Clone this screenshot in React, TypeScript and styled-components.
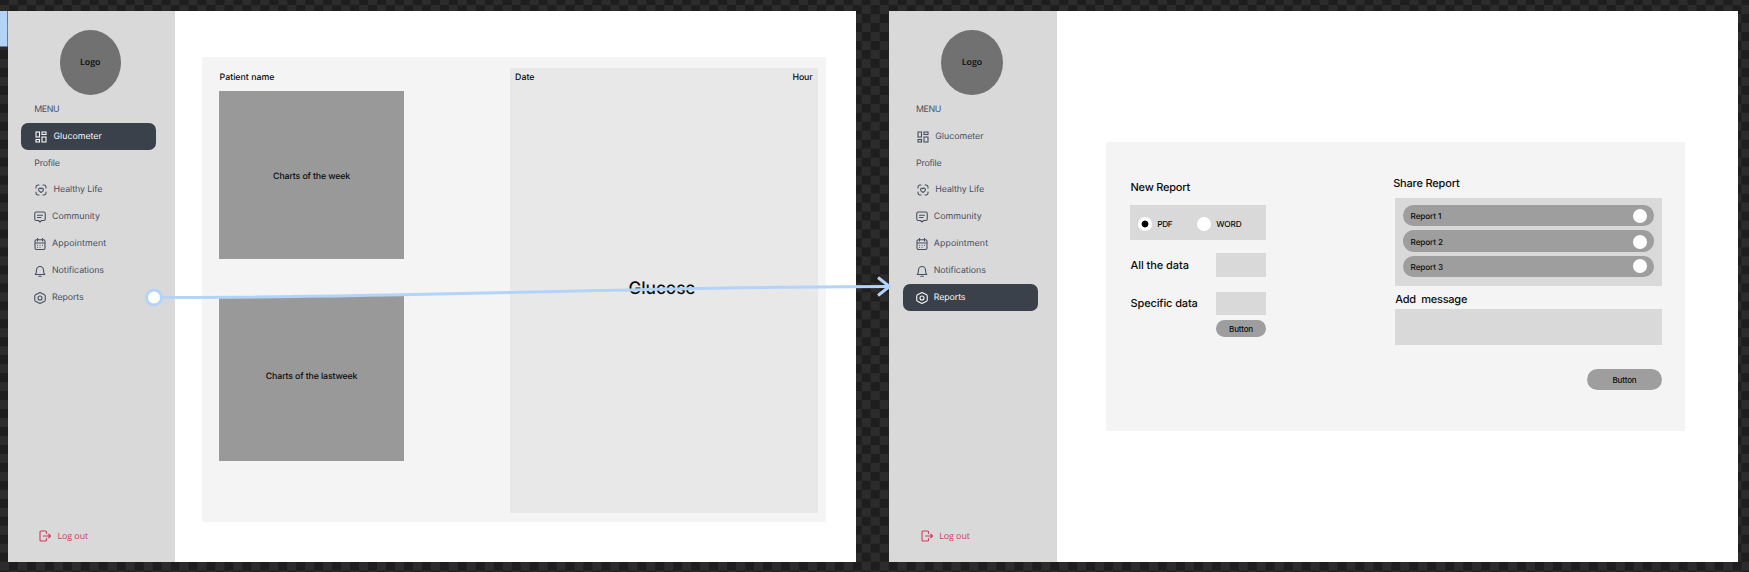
import React from 'react';
import styled, { createGlobalStyle, css } from 'styled-components';

const GlobalStyle = createGlobalStyle`
  *, *::before, *::after { box-sizing: border-box; }
  body { margin: 0; overflow: hidden; }
`;

/* ---------- canvas and boards ---------- */

const Canvas = styled.div`
  position: relative;
  display: flex;
  gap: 33.1px;
  width: 1749px;
  height: 572px;
  padding: 10.5px 0 0 7.5px;
  overflow: hidden;
  background: repeating-conic-gradient(#2c2c2c 0 25%, #1e1e1e 0 50%) 0 -3.9px / 17.968px 17.968px;
  font-family: Inter, 'Liberation Sans', sans-serif;
  font-size: 8.8px;
  font-weight: 500;
  line-height: 1;
  color: #0c0c0c;
  text-rendering: geometricPrecision;
`;

const Board = styled.section`
  display: flex;
  flex: none;
  align-items: flex-start;
  width: 848.7px;
  height: 551.4px;
  background: #fff;
`;

const Text = styled.span<{ $size?: number; $track?: number; $drop?: number }>`
  padding-top: ${p => p.$drop ?? 0}px;
  font-size: ${p => p.$size ?? 8.8}px;
  letter-spacing: ${p => p.$track ?? 0}px;
  white-space: pre;
`;

/* ---------- sidebar ---------- */

const Side = styled.aside`
  display: flex;
  flex: none;
  flex-direction: column;
  align-items: flex-start;
  width: 167.8px;
  height: 100%;
  padding: 19px 0 18px 13.5px;
  background: #d9d9d9;
  color: #475063;
  font-weight: 400;
`;

const Logo = styled.div`
  display: flex;
  align-items: center;
  justify-content: center;
  width: 61.3px;
  height: 65px;
  margin-left: 38.6px;
  border-radius: 50%;
  background: #717171;
  color: #0c0c0c;
  font-family: 'Open Sans', sans-serif;
  font-weight: 600;
`;

const Heading = styled.div<{ $height: number }>`
  display: flex;
  align-items: center;
  height: ${p => p.$height}px;
  padding-left: 13.3px;
`;

const Item = styled.div<{ $active?: boolean; $indent: number }>`
  display: flex;
  flex: none;
  align-items: center;
  width: 135px;
  height: 27px;
  padding-left: ${p => p.$indent}px;
  border-radius: 7px;
  ${p => p.$active && css`
    background: #3a414b;
    color: #f6f7f8;
  `}
`;

const LogOut = styled.div`
  display: flex;
  align-items: center;
  gap: 6.4px;
  height: 16px;
  margin-top: auto;
  padding-left: 18px;
  color: #cb3f62;
  font-family: 'Open Sans', sans-serif;
`;

const Glyph = styled.svg<{ $gap?: number }>`
  flex: none;
  width: 12px;
  height: 12px;
  margin-right: ${p => p.$gap ?? 0}px;
  fill: none;
  stroke: currentColor;
  stroke-width: 2.2;
  stroke-linecap: round;
  stroke-linejoin: round;
`;

const icons: Record<string, React.ReactNode> = {
  grid: (
    <g strokeLinejoin="miter">
      <rect x="2" y="2" width="7" height="10" />
      <rect x="14" y="2" width="8" height="5" />
      <rect x="2" y="17" width="7" height="5" />
      <rect x="14" y="12" width="8" height="10" />
    </g>
  ),
  heart: (
    <>
      <path d="M2 8V6a4 4 0 0 1 3.500-4H8M16 2h2.500A4 4 0 0 1 22 6v2M22 16v2a4 4 0 0 1-3.500 4H16M8 22H5.500A4 4 0 0 1 2 18v-2" />
      <path d="M12 17c-3-2-5-3.600-5-6 0-3 3.500-3.600 5-1.500 1.500-2.100 5-1.500 5 1.500 0 2.400-2 4-5 6z" />
    </>
  ),
  chat: (
    <path d="M4.500 2h15A3 3 0 0 1 22.500 5v11a3 3 0 0 1-3 3H15l-3 3-3-3H4.500a3 3 0 0 1-3-3V5a3 3 0 0 1 3-3zM7 8.500h10M7 13h7" />
  ),
  calendar: (
    <>
      <path d="M5 3.500h14a3 3 0 0 1 3 3V20a3 3 0 0 1-3 3H5a3 3 0 0 1-3-3V6.500a3 3 0 0 1 3-3zM2 10h20M7 1v5M17 1v5" />
      <path d="M7 14.500h.1M12 14.500h.1M17 14.500h.1M7 18.500h.1M12 18.500h.1" />
    </>
  ),
  bell: <path d="M2.500 19h19c-2-2-2.500-4-2.500-9a7 7 0 0 0-14 0c0 5-.5 7-2.500 9zM9.500 22.500h5" />,
  hexagon: (
    <>
      <path d="M12 1l9 4.500q1.500.8 1.500 2.500v8q0 1.700-1.500 2.500L12 23l-9-4.500Q1.500 17.700 1.500 16V8Q1.500 6.300 3 5.500z" />
      <circle cx="12" cy="12" r="4" />
    </>
  ),
  exit: <path d="M15 7V4a2 2 0 0 0-2-2H4a2 2 0 0 0-2 2v16a2 2 0 0 0 2 2h9a2 2 0 0 0 2-2v-3M9 12h14M19.500 8.500L23 12l-3.500 3.500" />,
};

const Icon = ({ name, gap }: { name: string; gap?: number }) => (
  <Glyph viewBox="0 0 24 24" $gap={gap}>{icons[name]}</Glyph>
);

type NavEntry = { label: string; icon: string; track: number; indent: number; gap: number };

const glucometer: NavEntry = { label: 'Glucometer', icon: 'grid', track: 0, indent: 13.9, gap: 6.6 };
const profile: NavEntry[] = [
  { label: 'Healthy Life', icon: 'heart', track: -0.06, indent: 14, gap: 6.5 },
  { label: 'Community', icon: 'chat', track: 0.03, indent: 13, gap: 6 },
  { label: 'Appointment', icon: 'calendar', track: 0.1, indent: 13, gap: 6 },
  { label: 'Notifications', icon: 'bell', track: -0.04, indent: 13, gap: 6 },
  { label: 'Reports', icon: 'hexagon', track: -0.08, indent: 13, gap: 6 },
];

const NavItem = ({ entry, active }: { entry: NavEntry; active: string }) => (
  <Item $active={entry.label === active} $indent={entry.indent}>
    <Icon name={entry.icon} gap={entry.gap} />
    <Text $track={entry.track} $drop={2.2}>{entry.label}</Text>
  </Item>
);

const Sidebar = ({ active }: { active: string }) => (
  <Side>
    <Logo><Text>Logo</Text></Logo>
    <Heading $height={28.8}><Text $track={-0.42} $drop={2}>MENU</Text></Heading>
    <NavItem entry={glucometer} active={active} />
    <Heading $height={26}><Text $track={-0.2} $drop={1.5}>Profile</Text></Heading>
    {profile.map(entry => <NavItem key={entry.label} entry={entry} active={active} />)}
    <LogOut>
      <Icon name="exit" />
      <Text $drop={1.2}>Log out</Text>
    </LogOut>
  </Side>
);

/* ---------- glucometer board ---------- */

const GlucosePanel = styled.main`
  display: flex;
  align-items: flex-start;
  width: 624px;
  height: 465px;
  margin: 46.4px 0 0 26.7px;
  padding: 11px 8.2px 0 16.9px;
  background: #f4f4f4;
`;

const Charts = styled.div`
  display: flex;
  flex-direction: column;
  width: 185.4px;
`;

const PatientName = styled.div`
  display: flex;
  align-items: center;
  height: 19px;
  margin-bottom: 4px;
  padding-left: 0.7px;
`;

const Chart = styled.div<{ $height: number; $shift: number }>`
  display: flex;
  align-items: center;
  justify-content: center;
  height: ${p => p.$height}px;
  background: #999;

  & + & { margin-top: 37.5px; }
  & > span { margin-top: ${p => p.$shift}px; }
`;

const Reading = styled.div`
  display: flex;
  flex: 1;
  flex-direction: column;
  height: 444.5px;
  margin: 0.4px 0 0 105.4px;
  background: #e8e8e8;
`;

const ReadingHeader = styled.div`
  display: flex;
  justify-content: space-between;
  padding: 5.3px 5.3px 0 5.4px;
`;

const ReadingValue = styled.div`
  display: flex;
  align-items: center;
  justify-content: center;
  height: 24px;
  margin-top: 193.3px;
  padding-right: 3.5px;
`;

/* ---------- reports board ---------- */

const ReportPanel = styled.main`
  display: flex;
  gap: 128.5px;
  width: 578.8px;
  height: 288.8px;
  margin: 131.4px 0 0 48.8px;
  padding-left: 24px;
  background: #f4f4f4;
`;

const NewReport = styled.div`
  display: flex;
  flex-direction: column;
  width: 136.2px;
  padding-top: 37.5px;
`;

const ShareReport = styled.div`
  display: flex;
  flex-direction: column;
  width: 267.7px;
  padding-top: 33.2px;
`;

const Title = styled.h2<{ $indent?: number }>`
  display: flex;
  align-items: center;
  height: 16px;
  margin: 0;
  padding-left: 0.6px;
  text-indent: ${p => p.$indent ?? 0}px;
  font: inherit;
`;

const Formats = styled.div`
  display: flex;
  align-items: center;
  height: 35px;
  margin-top: 9.5px;
  padding: 3px 0 0 8.5px;
  background: #d9d9d9;
`;

const Format = styled.label`
  display: flex;
  align-items: center;
  gap: 4.8px;
  width: 59px;
`;

const Dot = styled.i<{ $checked?: boolean; $shift?: number }>`
  flex: none;
  width: 14px;
  height: 14px;
  margin-top: ${p => p.$shift ?? 0}px;
  border-radius: 50%;
  background: ${p => (p.$checked ? 'radial-gradient(circle, #000 3px, #fff 3.8px)' : '#fff')};
`;

const Field = styled.div<{ $gap: number }>`
  display: flex;
  align-items: center;
  justify-content: space-between;
  height: 23.4px;
  margin-top: ${p => p.$gap}px;
  padding-left: 0.6px;
`;

const Input = styled.div`
  width: 50px;
  height: 100%;
  background: #d9d9d9;
`;

const Button = styled.button<{ $width: number; $height: number; $gap: number }>`
  display: flex;
  align-items: center;
  justify-content: center;
  align-self: flex-end;
  width: ${p => p.$width}px;
  height: ${p => p.$height}px;
  margin: ${p => p.$gap}px 0 0;
  padding: 1px 0 0;
  border: 0;
  border-radius: 12px;
  background: #9e9e9e;
  color: inherit;
  font: inherit;
`;

const ReportList = styled.div`
  display: flex;
  flex-direction: column;
  gap: 4px;
  height: 87.5px;
  margin: 7px 0 6px;
  padding: 7px 8.5px 0;
  background: #d9d9d9;
`;

const ReportRow = styled.div<{ $shift: number }>`
  display: flex;
  align-items: center;
  justify-content: space-between;
  height: 21.3px;
  padding: 0 7px 0 7.5px;
  border-radius: 11px;
  background: #9e9e9e;

  & > span { margin-top: ${p => p.$shift}px; }
`;

const Message = styled.div`
  height: 35.3px;
  margin-top: 1.8px;
  background: #d9d9d9;
`;

const reports = [
  { label: 'Report 1', shift: 1, dot: 0.5 },
  { label: 'Report 2', shift: 2.5, dot: 2 },
  { label: 'Report 3', shift: 2.5, dot: 0 },
];

/* ---------- prototype connector ---------- */

const Overlay = styled.svg`
  position: absolute;
  inset: 0;
  width: 100%;
  height: 100%;
  fill: none;
  stroke: #b3d4f8;
  stroke-width: 3;
`;

const Connector = () => (
  <Overlay viewBox="0 0 1749 572">
    <rect x="-4" y="11" width="11.5" height="35.5" fill="#b3d4f8" stroke="none" />
    <path d="M162 297.500C400 298 650 286.500 888 286.500" />
    <path d="M878 277.500L889.500 286.500L878 295.500" />
    <circle cx="154" cy="297.5" r="7.5" fill="#fff" />
  </Overlay>
);

const App = () => (
  <>
    <GlobalStyle />
    <Canvas>
      <Board>
        <Sidebar active="Glucometer" />
        <GlucosePanel>
          <Charts>
            <PatientName><Text $track={0} $drop={1.5}>Patient name</Text></PatientName>
            <Chart $height={168} $shift={2}><Text $track={-0.14} $drop={2.5}>Charts of the week</Text></Chart>
            <Chart $height={164.3} $shift={-5}><Text $track={-0.14} $drop={1.8}>Charts of the lastweek</Text></Chart>
          </Charts>
          <Reading>
            <ReadingHeader>
              <Text>Date</Text>
              <Text $track={-0.15}>Hour</Text>
            </ReadingHeader>
            <ReadingValue><Text $size={17.3} $track={-0.1} $drop={1.5}>Glucose</Text></ReadingValue>
          </Reading>
        </GlucosePanel>
      </Board>
      <Board>
        <Sidebar active="Reports" />
        <ReportPanel>
          <NewReport>
            <Title><Text $size={11} $track={-0.22}>New Report</Text></Title>
            <Formats>
              <Format><Dot $checked /><Text $size={8.3} $track={-0.33} $drop={2.5}>PDF</Text></Format>
              <Format><Dot /><Text $size={8.3} $track={-0.12} $drop={2.5}>WORD</Text></Format>
            </Formats>
            <Field $gap={13.3}><Text $size={11} $track={-0.06} $drop={1}>All the data</Text><Input /></Field>
            <Field $gap={15.4}><Text $size={11} $track={-0.12} $drop={0.5}>Specific data</Text><Input /></Field>
            <Button $width={50} $height={17.6} $gap={4.5}><Text $size={8} $track={-0.15}>Button</Text></Button>
          </NewReport>
          <ShareReport>
            <Title $indent={-2}><Text $size={11} $track={-0.18} $drop={0.8}>Share Report</Text></Title>
            <ReportList>
              {reports.map(r => (
                <ReportRow key={r.label} $shift={r.shift}>
                  <Text $size={8.2} $track={-0.12}>{r.label}</Text>
                  <Dot $shift={r.dot} />
                </ReportRow>
              ))}
            </ReportList>
            <Title><Text $size={11} $track={-0.23}>{'Add  message'}</Text></Title>
            <Message />
            <Button $width={75.5} $height={21.5} $gap={24.3}><Text $size={8} $track={-0.15}>Button</Text></Button>
          </ShareReport>
        </ReportPanel>
      </Board>
      <Connector />
    </Canvas>
  </>
);

export default App;
